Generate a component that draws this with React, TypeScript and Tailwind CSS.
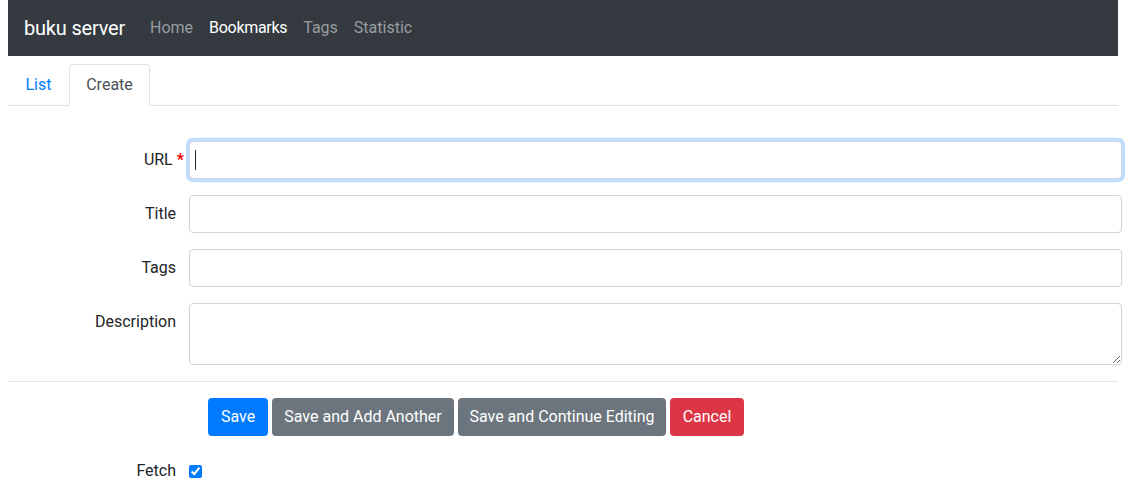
import { useState } from 'react';

const NAV_LINKS = [
  { label: 'Home', active: false },
  { label: 'Bookmarks', active: true },
  { label: 'Tags', active: false },
  { label: 'Statistic', active: false },
];

const inputClass =
  'block w-full h-[38px] rounded-[4px] border border-[#ced4da] bg-white px-3 text-base text-[#495057] outline-none';

function FieldRow({ label, required, children }: { label: string; required?: boolean; children: React.ReactNode }) {
  return (
    <div className="flex items-start mb-4">
      <label className="w-[168px] shrink-0 text-right leading-[38px] text-[#212529]">
        {label}
        {required && <span className="text-[#ff0000] font-bold ml-1 -mr-2">*</span>}
      </label>
      <div className="flex-1 ml-[13px] -mr-1">{children}</div>
    </div>
  );
}

export default function App() {
  const [fetch, setFetch] = useState(true);

  return (
    <div className="bg-white min-h-screen text-base text-[#212529]" style={{ fontFamily: 'Roboto, "Liberation Sans", sans-serif' }}>
      <div className="w-[1110px] ml-2">
        {/* Navbar */}
        <nav className="h-14 bg-[#343a40] flex items-center px-4">
          <span className="text-white text-xl mr-[17px] tracking-[-0.2px]">buku server</span>
          <ul className="flex">
            {NAV_LINKS.map((link) => (
              <li key={link.label}>
                <a className={`px-2 ${link.active ? 'text-white tracking-[-0.3px]' : 'text-[#9a9da0]'}`}>{link.label}</a>
              </li>
            ))}
          </ul>
        </nav>

        {/* Tabs */}
        <ul className="mt-2 flex border-b border-[#dee2e6]">
          <li className="-mb-px">
            <a className="block w-[61px] text-center py-2 leading-6 border border-transparent text-[#007bff]">List</a>
          </li>
          <li className="-mb-px">
            <a className="block w-[81px] text-center py-2 leading-6 border border-[#dee2e6] border-b-white rounded-t-[4px] bg-white text-[#495057]">
              Create
            </a>
          </li>
        </ul>

        {/* Form */}
        <form className="pt-[35px]" onSubmit={(e) => e.preventDefault()}>
          <FieldRow label="URL" required>
            <div className="relative">
              <input
                type="text"
                className={`${inputClass} border-[#80bdff] shadow-[0_0_0_3.2px_rgba(0,123,255,0.25)]`}
              />
              <div className="absolute left-[6px] top-[9px] w-px h-5 bg-[#212529]" />
            </div>
          </FieldRow>
          <FieldRow label="Title">
            <input type="text" className={inputClass} />
          </FieldRow>
          <FieldRow label="Tags">
            <input type="text" className={inputClass} />
          </FieldRow>
          <FieldRow label="Description">
            <textarea className="block w-full h-[62px] rounded-[4px] border border-[#ced4da] bg-white px-3 py-1.5 text-base outline-none" />
          </FieldRow>

          <hr className="border-t border-[#e5e5e5] mt-4 mb-4" />

          <div className="flex gap-1 ml-[200px]">
            <button type="submit" className="h-[38px] w-[60px] rounded-[4px] bg-[#007bff] text-white">Save</button>
            <button type="button" className="h-[38px] w-[182px] rounded-[4px] bg-[#6c757d] text-white">Save and Add Another</button>
            <button type="button" className="h-[38px] w-[208px] rounded-[4px] bg-[#6c757d] text-white">Save and Continue Editing</button>
            <button type="button" className="h-[38px] w-[74px] rounded-[4px] bg-[#dc3545] text-white">Cancel</button>
          </div>

          <div className="flex items-center mt-4 h-[38px]">
            <label className="w-[168px] shrink-0 text-right">Fetch</label>
            <input
              type="checkbox"
              checked={fetch}
              onChange={(e) => setFetch(e.target.checked)}
              className="ml-[13px] w-[13px] h-[13px] accent-[#007bff]"
            />
          </div>
        </form>
      </div>
    </div>
  );
}
